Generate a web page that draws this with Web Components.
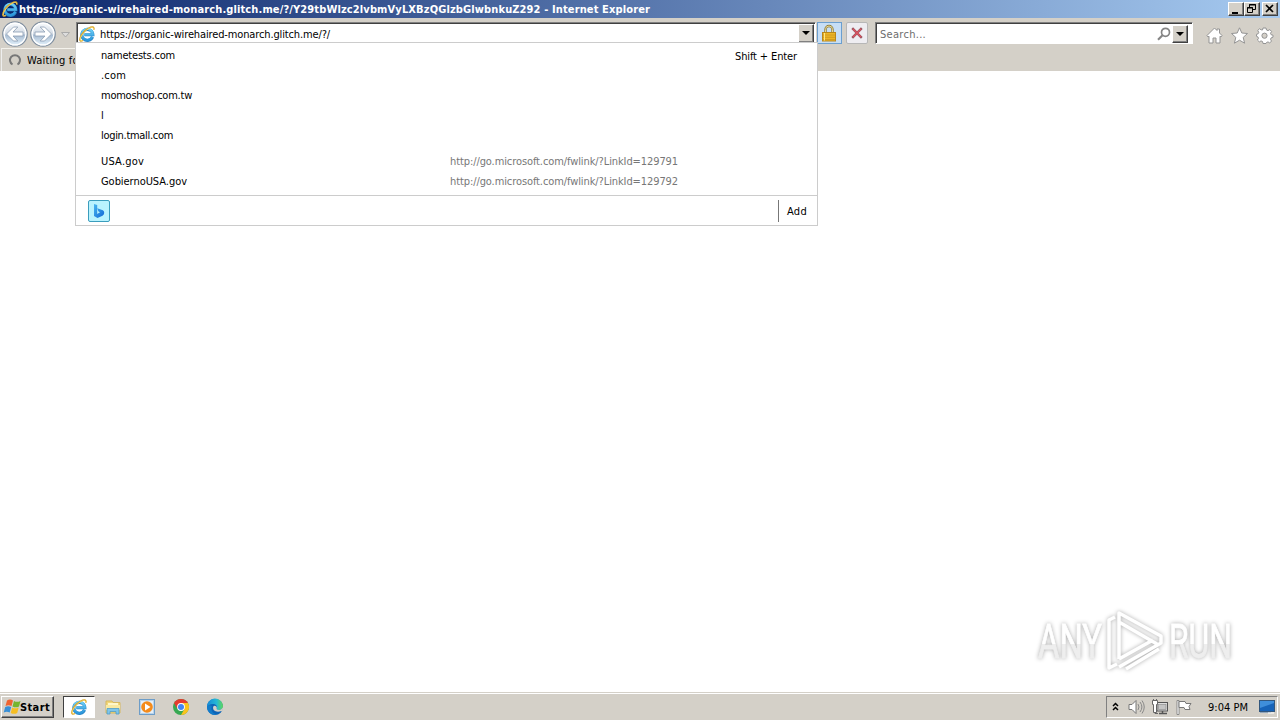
<!DOCTYPE html>
<html lang="en"><head><meta charset="utf-8"><title>Internet Explorer</title>
<style>html,body{margin:0;width:1280px;height:720px;overflow:hidden;background:#fff}body{font:11px/14px "DejaVu Sans Condensed","DejaVu Sans",sans-serif;color:#000}</style></head>
<body><ie-desktop></ie-desktop>
<script>
const def=(name,html,after)=>customElements.define(name,class extends HTMLElement{
  connectedCallback(){ if(this.shadowRoot)return;
    this.attachShadow({mode:'open'}).innerHTML='<style>*{box-sizing:border-box}svg{display:block;overflow:visible}</style>'+html;
    if(after)after(this,this.shadowRoot);}
});
/* A single line of text whose letter spacing is tuned to a given width */
def('fit-text','<style>:host{display:block;white-space:pre;height:14px;line-height:16px}span{display:inline-block}</style><span></span>',(h,r)=>{
  const s=r.querySelector('span');s.textContent=h.getAttribute('text');
  const w=+h.getAttribute('w');
  if(w){const n=s.textContent.length;const cur=s.getBoundingClientRect().width;s.style.letterSpacing=((w-cur)/n)+'px';}
});
const icons={
ie:`<svg viewBox="0 0 18 18" width="100%" height="100%"><defs><linearGradient id="a" x2="0" y2="1"><stop stop-color="#6fd0f7"/><stop offset="1" stop-color="#2b97dc"/></linearGradient></defs><path d="M15.200 12.200A6.200 6.200 0 1 1 15.600 9.800H6" fill="none" stroke="#2a86c6" stroke-width="3.500"/><path d="M15 12A6.200 6.200 0 1 1 15.500 9.800H6" fill="none" stroke="url(#a)" stroke-width="2.500"/><path d="M4.500 16.300C1.500 18 .2 16.200 1.300 13.200C2.800 9 7 4.500 11 2.300C14.500 .3 17.800 .6 16.600 4.300" fill="none" stroke="#d9a62c" stroke-width="1.600"/><path d="M3.800 16.300C1.700 17 1 15.500 1.800 13.200C3.500 9 7.500 5 11.300 2.800C14 1.300 16.800 1.200 16.200 3.600" fill="none" stroke="#ffe274" stroke-width=".8"/></svg>`,
back:`<svg width="28" height="28" viewBox="0 0 28 28"><defs><linearGradient id="b" x2="0" y2="1"><stop stop-color="#fbfdff"/><stop offset=".48" stop-color="#d3dbe5"/><stop offset=".55" stop-color="#a9bdd3"/><stop offset="1" stop-color="#e8f6ff"/></linearGradient></defs><circle cx="14" cy="14" r="12.200" fill="url(#b)" stroke="#8391a1" stroke-width="1.300"/><circle cx="14" cy="14" r="10.900" fill="none" stroke="#fff" stroke-width="1.200"/><path d="M5.500 14L12.500 7h4.300L12 12h10v4H12l4.800 5h-4.300z" fill="#fff" stroke="#8a9db3" stroke-width=".8"/></svg>`,
lock:`<svg width="14" height="17" viewBox="0 0 14 17"><path d="M3.500 8V4.500a3.500 3.500 0 0 1 7 0V8" fill="none" stroke="#8d7b3b" stroke-width="2.400"/><path d="M3.500 8V4.500a3.500 3.500 0 0 1 7 0V8" fill="none" stroke="#e7d792" stroke-width="1"/><rect x=".5" y="7.500" width="13" height="8.500" fill="#edb626" stroke="#b8861c"/><path d="M1 10h12M1 12.300h12M1 14.500h12" stroke="#cb951e" stroke-width=".8"/><path d="M2.500 8v7.500" stroke="#ffe884"/></svg>`,
x:`<svg width="12" height="12" viewBox="0 0 12 12"><path d="M1.200 1.200l9.600 9.600M10.800 1.200l-9.600 9.600" stroke="#99545e" stroke-width="2.400"/><path d="M2 2l8 8M10 2l-8 8" stroke="#db5360" stroke-width="1.300"/></svg>`,
mag:`<svg width="14" height="14" viewBox="0 0 14 14"><circle cx="8.500" cy="5.300" r="4" fill="#fff" stroke="#858585" stroke-width="1.700"/><path d="M5.500 8.300L1 12.800" stroke="#858585" stroke-width="2.200"/></svg>`,
home:`<svg width="17" height="17" viewBox="0 0 17 17"><path d="M1 8.500L8.500 1l2.500 2.500V2h2.500v4L16 8.500 15 10l-1-.8V16H10v-5H7v5H3V9.200L2 10z" fill="#fff" stroke="#949494"/></svg>`,
star:`<svg width="17" height="17" viewBox="0 0 17 17"><path d="M8.500 .8l2.300 5.200 5.700.5-4.300 3.900 1.400 5.800-5.100-3-5.100 3 1.400-5.800L.5 6.500 6.200 6z" fill="#fff" stroke="#949494"/></svg>`,
gear:`<svg width="17" height="17" viewBox="0 0 17 17"><path d="M7 1h3l.5 2 1.500.6 1.800-1 1.800 1.900-1.100 1.700.6 1.500 1.900.5v2l-1.900.7-.6 1.400 1 1.800-1.800 1.800-1.700-1-1.500.6L10 16.500H7l-.5-2-1.500-.6-1.700 1-1.900-1.900 1.100-1.700-.6-1.400L.5 9.300v-2l1.600-.5.7-1.500-1.100-1.800 1.800-1.700 1.700 1L6.500 3z" fill="#fff" stroke="#949494"/><circle cx="8.500" cy="8.700" r="2.600" fill="#d4d0c8" stroke="#949494"/></svg>`,
bing:`<svg width="22" height="22" viewBox="0 0 22 22"><defs><linearGradient id="c" x2="1" y2="1"><stop stop-color="#48b7ef"/><stop offset="1" stop-color="#1267d6"/></linearGradient></defs><rect x=".5" y=".5" width="21" height="21" rx="1.500" fill="#b9f3fe" stroke="#3b9dbd"/><path d="M6 4l3.200 1v9l2.800-1.800-1.700-1L9.300 8.300l5.500 2c1.800 1 2 4-.3 5.500L9.500 18 6 16z" fill="url(#c)"/></svg>`,
win:`<svg width="18" height="17" viewBox="0 0 18 17"><path d="M3 2.500q3-2 6 0L7.500 8q-3-1.700-6 0z" fill="#ef6330"/><path d="M10 3q3 1.700 6.500 0L15 8.500q-3 1.700-6.500 0z" fill="#75b52f"/><path d="M1.200 9q3-1.700 6 0L5.700 14.500q-3-1.700-6 0z" fill="#388fd6"/><path d="M8.200 9.500q3 1.700 6.500 0L13.200 15q-3 1.700-6.500 0z" fill="#f6be22"/></svg>`,
folder:`<svg width="16" height="16" viewBox="0 0 16 16"><path d="M1 2h6l1 1.500h7V14H1z" fill="#f2d778" stroke="#d6b860"/><path d="M3 4h10v5H3z" fill="#fff7c9"/><path d="M1 6h14v5H1z" fill="#f9e9a1"/><path d="M2 15V9.500h12V15h-3v-2.500H5V15z" fill="#80c5e9" stroke="#4f9dc8" stroke-width=".8"/></svg>`,
media:`<svg width="16" height="16" viewBox="0 0 16 16"><rect x=".5" y=".5" width="15" height="15" fill="#b8d4ec" stroke="#6d9dc8"/><rect x="2" y="2" width="12" height="12" fill="#e5eff8"/><circle cx="8" cy="8" r="5.800" fill="#f48b1b"/><path d="M6 4.500v7L11.500 8z" fill="#fff"/></svg>`,
chrome:`<svg width="16" height="16" viewBox="0 0 16 16"><circle cx="8" cy="8" r="8" fill="#37a852"/><path d="M8 8L1.070 4A8 8 0 0 1 14.930 4z" fill="#e53b2f"/><path d="M8 4h6.930A8 8 0 0 1 8 16l3.500-6z" fill="#fbc31d"/><path d="M1.070 4L4.500 10l3-6z" fill="#e53b2f"/><circle cx="8" cy="8" r="3.900" fill="#fff"/><circle cx="8" cy="8" r="3" fill="#4285f4"/></svg>`,
edge:`<svg width="16" height="16" viewBox="0 0 16 16"><defs><linearGradient id="e"><stop stop-color="#168ad7"/><stop offset=".6" stop-color="#26b8d5"/><stop offset="1" stop-color="#62d957"/></linearGradient></defs><circle cx="8" cy="8" r="8" fill="#0d65b8"/><path d="M0 8a8 8 0 0 1 16-1c0 3-2.500 4-5 4-1.500 0-2-.8-1.500-1.500C11 7 8.500 5 6 5 3 5 .8 6.500 0 8z" fill="url(#e)"/><path d="M6.300 7.500c-1.300 4 3 6.500 8.200 4.500l1 0A8 8 0 0 0 16 8c-1 3-4.500 3.500-6 2.500-1-1 .5-1.500-.7-3C8 6.500 7 6.700 6.300 7.500z" fill="#d4d0c8"/><path d="M5 7c-2 4 1 8 5 8.700A8 8 0 0 1 0 8C1 6 3 5.500 5 7z" fill="#137cca"/></svg>`,
sound:`<svg width="17" height="16" viewBox="0 0 17 16"><path d="M1 5.500h3L8 1.500v13L4 10.500H1z" fill="#fff" stroke="#777"/><path d="M10 5q2 3 0 6M12 3q3.800 5 0 10M14 1.500q4.500 6.500 0 13" fill="none" stroke="#888"/></svg>`,
net:`<svg width="16" height="16" viewBox="0 0 16 16"><rect x="5" y="3.500" width="10.500" height="8.500" fill="#ddd" stroke="#555"/><rect x="6.500" y="5.500" width="7.500" height="5" fill="#c4c4c4" stroke="#888" stroke-width=".6"/><path d="M7 14.500h8M10.500 12v2" stroke="#555" stroke-width="1.500"/><path d="M.5 1.500h5v4h-1v8h-3v-8h-1z" fill="#fff" stroke="#666"/><path d="M1.500 0v2M4.500 0v2M3 13v1.500h3" fill="none" stroke="#666"/></svg>`,
flag:`<svg width="16" height="16" viewBox="0 0 16 16"><path d="M1 1.500h2v14H1z" fill="#fff" stroke="#777" stroke-width=".8"/><path d="M3 2.500h6l1 2h5l-2 3 1 3H9l-1-2H3z" fill="#fff" stroke="#777"/></svg>`,
desk:`<svg width="16" height="14" viewBox="0 0 16 14"><rect x=".5" y=".5" width="15" height="11" fill="#1763b8" stroke="#33577d"/><path d="M1 1h14v2L1 8z" fill="#3f8eda"/><path d="M1 12.500h11" stroke="#91a6bb"/><path d="M9 13h6" stroke="#fff"/></svg>`,
chev:`<svg width="7" height="9" viewBox="0 0 7 9"><path d="M1 4l2.500-2.500L6 4M1 8l2.500-2.500L6 8" fill="none" stroke="#000" stroke-width="1.500"/></svg>`,
spin:`<svg width="12" height="12" viewBox="0 0 12 12"><path d="M3.500 10.500A5 5 0 1 1 8.500 10.500" fill="none" stroke="#777" stroke-width="2"/></svg>`
};
def('ui-icon','<style>:host{display:block;flex:none}</style><div></div>',(h,r)=>{const d=r.querySelector('div');d.innerHTML=icons[h.getAttribute('name')];const s=h.getAttribute('size');if(s)d.style.cssText=`width:${s}px;height:${s}px`});
/* Classic raised button; glyph is min, restore, close or down */
def('classic-button',`<style>:host{display:block;flex:none;width:16px;height:14px;background:#d4d0c8;border:1px solid;border-color:#fff #404040 #404040 #fff;box-shadow:inset -1px -1px #808080;box-sizing:border-box}:host([tall]){height:19px}svg{margin:auto}</style><svg width="14" height="12"></svg>`,(h,r)=>{
 const s=r.querySelector('svg'),k=h.getAttribute('glyph');
 s.innerHTML={min:'<path d="M3 9h6v2H3z"/>',restore:'<path d="M4.500 4V1.500h6v5H8M4 2h7" fill="none" stroke="#000"/><path d="M2.500 4.500h5v5h-5zM2 5h6" fill="none" stroke="#000" />',close:'<path d="M3 2l7 7M10 2l-7 7" stroke="#000" stroke-width="1.700"/>',down:'<path d="M3 6h8L7 10z"/>'}[k];
 if(k=='down')s.setAttribute('height','17');});
def('title-bar',`<style>:host{display:flex;height:18px;background:linear-gradient(90deg,#0a246a,#a6caf0);padding:0 2px;color:#fff;font-weight:bold;align-items:center}fit-text{flex:1;margin-left:1px}.b{display:flex}.b :last-child{margin-left:2px}</style>
<ui-icon name="ie" size="16"></ui-icon><fit-text w="631" text="https://organic-wirehaired-monarch.glitch.me/?/Y29tbWlzc2lvbmVyLXBzQGlzbGlwbnkuZ292 - Internet Explorer"></fit-text><div class="b"><classic-button glyph="min"></classic-button><classic-button glyph="restore"></classic-button><classic-button glyph="close"></classic-button></div>`);
def('address-bar',`<style>:host{display:flex;width:740px;height:22px;background:#fff;border:1px solid;border-color:#808080 #fff #d4d0c8 #808080;box-shadow:inset 1px 1px #404040;align-items:center;padding:1px 1px 0 2px;box-sizing:border-box}fit-text{flex:1;margin-left:4px;padding-left:1px}</style><ui-icon name="ie" size="16"></ui-icon><fit-text w="230" text="https://organic-wirehaired-monarch.glitch.me/?/"></fit-text><classic-button tall glyph="down"></classic-button>`);
def('search-box',`<style>:host{display:flex;flex:none;width:318px;height:22px;background:#fff;border:1px solid;border-color:#808080 #fff #fff #808080;box-shadow:inset 1px 1px #404040;align-items:center;padding:1px 3px 0 4px;color:#6d6d6d;box-sizing:border-box}fit-text{flex:1}ui-icon{margin-right:1px}i{width:1px}</style><fit-text w="46" text="Search..."></fit-text><ui-icon name="mag"></ui-icon><classic-button tall glyph="down" style="height:18px"></classic-button><i></i>`);
def('nav-bar',`<style>:host{display:block;height:53px;background:#d4d0c8}.r{display:flex;height:30px;padding:4px 8px 0 1px}.n{display:flex;flex:none;width:75px;height:28px;margin-top:-2px}.n ui-icon+ui-icon{transform:scaleX(-1)}.n svg{margin:12px 0 0 4px}.k{display:flex;flex:none;align-items:center;justify-content:center;height:22px;border:1px solid #6b9fd0;background:#c7def5;width:25px;margin-left:1px;padding-right:1px}.x{width:22px;border-color:#b7b7b7;background:#eeedf1;margin:0 7px 0 4px;border-radius:2px;padding:0}.t{display:flex;margin:5px -1px 0 auto;gap:8px}.s{display:flex;height:23px;width:240px;margin-left:1px;border-top:1px solid #f4f2ec;border-left:1px solid #eee;align-items:center;padding:0 0 0 7px;gap:6px}</style>
<div class="r"><div class="n"><ui-icon name="back"></ui-icon><ui-icon name="back"></ui-icon><svg width="9" height="6"><path d="M.5 .5h8L4.500 5z" fill="#ddd" stroke="#aaa"/></svg></div><address-bar></address-bar><div class="k"><ui-icon name="lock"></ui-icon></div><div class="k x"><ui-icon name="x"></ui-icon></div><search-box></search-box><div class="t"><ui-icon name="home"></ui-icon><ui-icon name="star"></ui-icon><ui-icon name="gear"></ui-icon></div></div>
<div class="s"><ui-icon name="spin"></ui-icon><fit-text w="56" text="Waiting for"></fit-text></div>`);
def('suggest-row',`<style>:host{display:flex;height:20px;align-items:center;padding-left:25px}.m{width:349px}.u{color:#777;flex:1}.h{margin-right:20px;padding-top:1px}</style>`,(h,r)=>{
 const a=n=>h.getAttribute(n);r.innerHTML+=`<fit-text class="m" w="${a('w')}" text="${a('text')}"></fit-text>`+`<fit-text class="u" ${a('url')?`w="228" text="${a('url')}"`:'text=""'}></fit-text>`+(a('hint')?`<fit-text class="h" w="62" text="${a('hint')}"></fit-text>`:'');});
def('address-suggestions',`<style>:host{display:flex;flex-direction:column;position:absolute;left:75px;top:42px;width:743px;height:184px;background:#fff;border:1px solid #ccc;padding-top:2px;box-sizing:border-box}.g{height:6px}.f{margin-top:auto;height:30px;border-top:1px solid #ccc;display:flex;align-items:center;justify-content:space-between;padding:0 10px 0 12px}.a{border-left:1px solid #777;height:22px;padding:4px 0 0 8px}</style>
<suggest-row text="nametests.com" w="74" hint="Shift + Enter"></suggest-row><suggest-row text=".com" w="25"></suggest-row><suggest-row text="momoshop.com.tw" w="91"></suggest-row><suggest-row text="l" w="3"></suggest-row><suggest-row text="login.tmall.com" w="72"></suggest-row><div class="g"></div><suggest-row text="USA.gov" w="43" url="http://go.microsoft.com/fwlink/?LinkId=129791"></suggest-row><suggest-row text="GobiernoUSA.gov" w="86" url="http://go.microsoft.com/fwlink/?LinkId=129792"></suggest-row>
<div class="f"><ui-icon name="bing"></ui-icon><div class="a"><fit-text w="20" text="Add"></fit-text></div></div>`);
def('water-mark',`<style>:host{display:block;position:absolute;left:1036px;top:608px}svg{filter:drop-shadow(0 0 2px #aaa)}text{font:48px "Roboto",sans-serif;fill:url(#w);stroke:url(#w);stroke-width:.8}</style><svg width="200" height="66" viewBox="0 0 200 66"><defs><linearGradient id="w" x2="0" y2="1"><stop offset=".54" stop-color="#fff"/><stop offset=".55" stop-color="#eee"/></linearGradient></defs><text x="2" y="50" textLength="64" lengthAdjust="spacingAndGlyphs">ANY</text><text x="133" y="50" textLength="63" lengthAdjust="spacingAndGlyphs">RUN</text><g fill="none" stroke="#fff" stroke-width="3.500" stroke-linejoin="round"><path d="M83 51V5l42 23v7L83 59M83 14l38 22M90 61l33-20M83 51l34-19"/><path d="M79 9l-6 3v48l8-4"/></g></svg>`);
def('task-bar',`<style>:host{display:flex;height:28px;background:#d4d0c8;border-top:1px solid #d4d0c8;box-shadow:inset 0 1px #fff;align-items:center;padding:2px 2px 2px 1px;box-sizing:border-box}.s{display:flex;width:53px;height:22px;border:1px solid;border-color:#fff #404040 #404040 #fff;box-shadow:inset -1px -1px #808080;align-items:center;font-weight:bold;padding-left:2px}.s fit-text{margin-left:-2px}.ie{width:32px;height:22px;margin-left:9px;background:#fff;border:1px solid;border-color:#404040 #fff #fff #404040;display:flex;align-items:center;justify-content:center}.q{display:flex;margin-left:10px;gap:18px}.t{margin-left:auto;height:22px;width:172px;border:1px solid;border-color:#808080 #fff #fff #808080;display:flex;align-items:center;padding-left:5px}</style>
<div class="s"><ui-icon name="win"></ui-icon><fit-text w="30" text="Start"></fit-text></div><div class="ie"><ui-icon name="ie" size="16"></ui-icon></div><div class="q"><ui-icon name="folder"></ui-icon><ui-icon name="media"></ui-icon><ui-icon name="chrome"></ui-icon><ui-icon name="edge"></ui-icon></div>
<div class="t"><ui-icon name="chev"></ui-icon><ui-icon name="sound" style="margin-left:9px"></ui-icon><ui-icon name="net" style="margin-left:7px"></ui-icon><ui-icon name="flag" style="margin-left:8px"></ui-icon><fit-text style="margin-left:16px" w="40" text="9:04 PM"></fit-text><ui-icon name="desk" style="margin-left:11px"></ui-icon></div>`);
def('ie-desktop',`<style>:host{display:flex;flex-direction:column;width:1280px;height:720px;position:relative;overflow:hidden}main{flex:1;background:#fff}</style><title-bar></title-bar><nav-bar></nav-bar><main></main><task-bar></task-bar><address-suggestions></address-suggestions><water-mark></water-mark>`);
</script></body></html>
